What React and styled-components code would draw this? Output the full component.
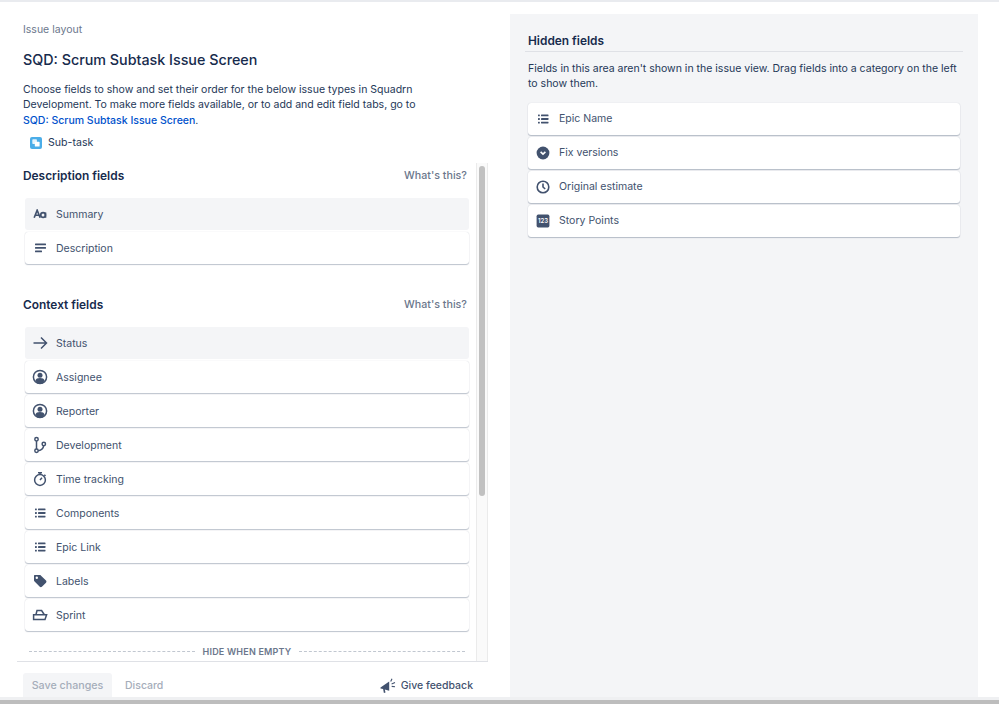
import React from 'react';
import styled, { createGlobalStyle } from 'styled-components';

const Global = createGlobalStyle`
  html, body { margin: 0; padding: 0; background: #fff; overflow: hidden; }
  body { font-family: Inter, "Liberation Sans", sans-serif; color: #172b4d; }
`;

const Page = styled.div`
  width: 999px; height: 704px; display: flex; flex-direction: column; overflow: hidden;
`;
const TopStrip = styled.div`height: 2px; background: #e9ebef; flex: none;`;
const BottomStrip = styled.div`height: 4px; background: #bdbdbd; flex: none; border-top: 3px solid #eff0f2; box-sizing: content-box;`;
const Main = styled.div`flex: 1; min-height: 0; display: flex; padding-top: 12px;`;
const Left = styled.div`
  width: 493px; margin-left: 17px; flex: none; display: flex; flex-direction: column;
`;
const Intro = styled.div`padding: 8px 0 0 6px; height: 149px; flex: none; box-sizing: border-box;`;
const Crumb = styled.div`font-size: 10.5px; line-height: 15px; color: #6b778c;`;
const Title = styled.h1`
  margin: 13px 0 0; font-size: 14.3px; line-height: 20px; font-weight: 500; color: #172b4d;
`;
const Para = styled.p`
  margin: 12px 0 0; width: 410px; font-size: 10.52px; line-height: 15.4px; color: #253858;
`;
const Anchor = styled.a`color: #0052cc; font-weight: 500; text-decoration: none;`;
const TypeTag = styled.div`
  margin: 7px 0 0 7px; display: flex; align-items: center; gap: 6px; font-size: 10.6px; line-height: 16px; color: #253858;
`;
const Scroller = styled.div`
  position: relative; width: 471px; height: 498px; flex: none; overflow: hidden;
  border-bottom: 1px solid #dfe1e6;
`;
const Track = styled.div`
  position: absolute; top: 0; right: 0; width: 10px; bottom: 0; background: #fafafa;
  border-left: 1px solid #ebebeb; border-right: 1px solid #ebebeb;
`;
const Thumb = styled.div`
  position: absolute; top: 3px; left: 2px; width: 6px; height: 330px; border-radius: 3px; background: #c1c1c1;
`;
const Content = styled.div`padding: 2px 0 0 6px; width: 446px;`;
const SectionHead = styled.div`
  height: 20px; display: flex; align-items: center; justify-content: space-between; padding-right: 2px;
`;
const SectionTitle = styled.h2`margin: 0; font-size: 11.9px; font-weight: 600; color: #172b4d;`;
const Help = styled.span`font-size: 10.7px; font-weight: 500; color: #6b778c;`;
const Rows = styled.div`
  display: flex; flex-direction: column; gap: 2px; margin: ${p => p.$top}px 0 0 ${p => p.$left}px;
  width: ${p => p.$width}px;
`;
const Row = styled.div`
  height: 32px; box-sizing: border-box; display: flex; align-items: center; gap: 4px; padding-left: 3px;
  border-radius: 3px; font-size: 10.52px; color: #42526e;
  background: ${p => (p.$locked ? '#f4f5f7' : '#fff')};
  box-shadow: ${p => (p.$locked ? 'none' : '0 1px 1px rgba(9,30,66,.25), 0 0 1px rgba(9,30,66,.2)')};
`;
const IconBox = styled.span`
  width: 24px; height: 24px; flex: none; display: flex; align-items: center; justify-content: center; color: #42526e;
`;
const Gap = styled.div`height: 30px;`;
const DividerRow = styled.div`
  margin: 13px 0 0 6px; display: flex; align-items: center; gap: 8px; height: 14px; width: 436px;
`;
const Dash = styled.div`flex: 1; border-top: 1px dashed #c1c7d0;`;
const DividerText = styled.span`font-size: 9px; font-weight: 600; letter-spacing: 0.2px; color: #6b778c;`;
const Footer = styled.div`
  display: flex; align-items: center; padding: 11px 0 0 6px; width: 450px;
`;
const SaveButton = styled.div`
  width: 89px; height: 25px; display: flex; align-items: center; justify-content: center; background: #f4f5f7;
  border-radius: 3px 3px 0 0; font-size: 10.7px; font-weight: 500; color: #a5adba;
`;
const Discard = styled.div`margin-left: 13px; font-size: 10.5px; font-weight: 500; color: #a5adba;`;
const Feedback = styled.div`
  margin-left: auto; display: flex; align-items: center; gap: 5px; font-size: 10.5px; font-weight: 500; color: #42526e;
`;
const Right = styled.aside`
  width: 468px; height: 683px; flex: none; box-sizing: border-box; background: #f4f5f7; padding: 19px 15px 0 15px;
`;
const HiddenHead = styled.h2`
  margin: 0; padding: 0 0 2px 3px; font-size: 11.9px; line-height: 16px; font-weight: 600; color: #172b4d;
  border-bottom: 1px solid #dfe1e6;
`;
const HiddenText = styled.p`
  margin: 9px 3px 0 3px; font-size: 10.52px; line-height: 15.4px; color: #253858;
`;

const Aa = () => (
  <svg width="14" height="10" viewBox="0 0 16 12" fill="none" stroke="currentColor" strokeWidth="2">
    <path d="M1 10.5 4.6 1.5 8.2 10.5M2.2 7.5h4.8" />
    <circle cx="11.7" cy="7.2" r="2.8" />
    <path d="M14.6 4.2v6.3" />
  </svg>
);
const Lines = () => (
  <svg width="24" height="24" viewBox="0 0 24 24" fill="currentColor">
    <rect x="7" y="7.5" width="11" height="1.8" rx=".5" />
    <rect x="7" y="11" width="11" height="1.8" rx=".5" />
    <rect x="7" y="14.5" width="7" height="1.8" rx=".5" />
  </svg>
);
const Arrow = () => (
  <svg width="24" height="24" viewBox="0 0 24 24" fill="none" stroke="currentColor" strokeWidth="1.5">
    <path d="M5.5 12h13M13 6.5l5.5 5.5-5.5 5.5" />
  </svg>
);
const Person = () => (
  <svg width="24" height="24" viewBox="0 0 24 24">
    <circle cx="12" cy="12" r="6.6" fill="#fff" stroke="currentColor" strokeWidth="1.5" />
    <circle cx="12" cy="10.2" r="2.5" fill="currentColor" />
    <path d="M7.4 15.6c.4-1.8 2.2-2.6 4.6-2.6s4.2.8 4.6 2.6l-1.8 2.8H9.2z" fill="currentColor" />
  </svg>
);
const Branch = () => (
  <svg width="24" height="24" viewBox="0 0 24 24" fill="none" stroke="currentColor" strokeWidth="1.5">
    <circle cx="8.5" cy="6.2" r="1.7" />
    <circle cx="8.5" cy="17.8" r="1.7" />
    <circle cx="15.8" cy="11" r="1.7" />
    <path d="M8.5 7.9v8.2M15.6 12.7c-.2 2.6-2 4.4-5.4 5" />
  </svg>
);
const Stopwatch = () => (
  <svg width="24" height="24" viewBox="0 0 24 24" fill="none" stroke="currentColor" strokeWidth="1.5">
    <circle cx="12" cy="13" r="5.4" />
    <path d="M10 5.8h4M12 6v1.6M12 13l2-2.2M16.3 7.8l1.2 1.2" />
  </svg>
);
const BulletList = () => (
  <svg width="24" height="24" viewBox="0 0 24 24" fill="currentColor">
    <rect x="7" y="7.5" width="1.8" height="1.8" rx=".5" />
    <rect x="7" y="11.1" width="1.8" height="1.8" rx=".5" />
    <rect x="7" y="14.7" width="1.8" height="1.8" rx=".5" />
    <rect x="10" y="7.5" width="7.5" height="1.8" rx=".4" />
    <rect x="10" y="11.1" width="7.5" height="1.8" rx=".4" />
    <rect x="10" y="14.7" width="7.5" height="1.8" rx=".4" />
  </svg>
);
const Tag = () => (
  <svg width="24" height="24" viewBox="0 0 24 24" fill="currentColor">
    <path fillRule="evenodd" d="M6.6 6h5.2c.4 0 .8.2 1 .4l5.2 5.2c.6.6.6 1.5 0 2.1l-4.1 4.1c-.6.6-1.5.6-2.1 0L6.6 12.6c-.3-.3-.6-.7-.6-1.1V6.8c0-.4.2-.8.6-.8zm2.2 1.6a1.2 1.2 0 1 0 0 2.4 1.2 1.2 0 0 0 0-2.4z" />
  </svg>
);
const Boat = () => (
  <svg width="24" height="24" viewBox="0 0 24 24" fill="none" stroke="currentColor" strokeWidth="1.5">
    <path d="M8 11.5 9 7.6h4.6l2.6 3.9" />
    <path d="M5.6 11.8h13l-1.6 4.6H5.6z" />
  </svg>
);
const ChevronDisc = () => (
  <svg width="24" height="24" viewBox="0 0 24 24">
    <circle cx="12" cy="12" r="6.4" fill="currentColor" />
    <path d="M9.6 10.9 12 13.2l2.4-2.3" fill="none" stroke="#fff" strokeWidth="1.6" />
  </svg>
);
const Clock = () => (
  <svg width="24" height="24" viewBox="0 0 24 24" fill="none" stroke="currentColor" strokeWidth="1.6">
    <circle cx="12" cy="12" r="5.8" />
    <path d="M12 8.6V12l2.2 2" />
  </svg>
);
const Numbers = () => (
  <svg width="24" height="24" viewBox="0 0 24 24">
    <rect x="5.6" y="5.6" width="12.8" height="12.8" rx="1.6" fill="currentColor" />
    <text x="12" y="14" textAnchor="middle" fontSize="6" fontWeight="600" fontFamily="Inter, sans-serif" fill="#fff">123</text>
  </svg>
);
const SubtaskIcon = () => (
  <svg width="12" height="12" viewBox="0 0 12 12">
    <rect width="12" height="12" rx="2" fill="#4bade8" />
    <rect x="2.3" y="2.3" width="4.6" height="4.6" rx=".7" fill="#fff" opacity=".85" />
    <rect x="4.8" y="4.8" width="4.8" height="4.8" rx=".7" fill="#fff" />
  </svg>
);
const Megaphone = () => (
  <svg width="16" height="16" viewBox="0 0 16 16" fill="#42526e">
    <path d="M.5 9.5 9.2 3.4v9.4L4.8 11.6l.7 3-1.6.4-.8-3.9L.5 10.6z" />
    <path d="M10.7 3.4 12 .8M11.6 6l3.4-1.4M11.7 8.4l3.3.3" stroke="#42526e" strokeWidth="1.1" fill="none" />
  </svg>
);

const description = [
  { name: 'Summary', icon: <Aa />, locked: true },
  { name: 'Description', icon: <Lines /> },
];
const context = [
  { name: 'Status', icon: <Arrow />, locked: true },
  { name: 'Assignee', icon: <Person /> },
  { name: 'Reporter', icon: <Person /> },
  { name: 'Development', icon: <Branch /> },
  { name: 'Time tracking', icon: <Stopwatch /> },
  { name: 'Components', icon: <BulletList /> },
  { name: 'Epic Link', icon: <BulletList /> },
  { name: 'Labels', icon: <Tag /> },
  { name: 'Sprint', icon: <Boat /> },
];
const hidden = [
  { name: 'Epic Name', icon: <BulletList /> },
  { name: 'Fix versions', icon: <ChevronDisc /> },
  { name: 'Original estimate', icon: <Clock /> },
  { name: 'Story Points', icon: <Numbers /> },
];

const FieldRows = ({ items, top, left, width }) => (
  <Rows $top={top} $left={left} $width={width}>
    {items.map(f => (
      <Row key={f.name} $locked={f.locked}>
        <IconBox>{f.icon}</IconBox>
        {f.name}
      </Row>
    ))}
  </Rows>
);

export default function App() {
  return (
    <Page>
      <Global />
      <TopStrip />
      <Main>
        <Left>
          <Intro>
            <Crumb>Issue layout</Crumb>
            <Title>SQD: Scrum Subtask Issue Screen</Title>
            <Para>
              Choose fields to show and set their order for the below issue types in Squadrn Development. To make more
              fields available, or to add and edit field tabs, go to <Anchor>SQD: Scrum Subtask Issue Screen</Anchor>.
            </Para>
            <TypeTag>
              <SubtaskIcon />
              Sub-task
            </TypeTag>
          </Intro>
          <Scroller>
            <Content>
              <SectionHead>
                <SectionTitle>Description fields</SectionTitle>
                <Help>What's this?</Help>
              </SectionHead>
              <FieldRows items={description} top={13} left={2} width={444} />
              <Gap />
              <SectionHead>
                <SectionTitle>Context fields</SectionTitle>
                <Help>What's this?</Help>
              </SectionHead>
              <FieldRows items={context} top={13} left={2} width={444} />
              <DividerRow>
                <Dash />
                <DividerText>HIDE WHEN EMPTY</DividerText>
                <Dash />
              </DividerRow>
            </Content>
            <Track>
              <Thumb />
            </Track>
          </Scroller>
          <Footer>
            <SaveButton>Save changes</SaveButton>
            <Discard>Discard</Discard>
            <Feedback>
              <Megaphone />
              Give feedback
            </Feedback>
          </Footer>
        </Left>
        <Right>
          <HiddenHead>Hidden fields</HiddenHead>
          <HiddenText>
            Fields in this area aren't shown in the issue view. Drag fields into a category on the left to show them.
          </HiddenText>
          <FieldRows items={hidden} top={11} left={3} width={432} />
        </Right>
      </Main>
      <BottomStrip />
    </Page>
  );
}
